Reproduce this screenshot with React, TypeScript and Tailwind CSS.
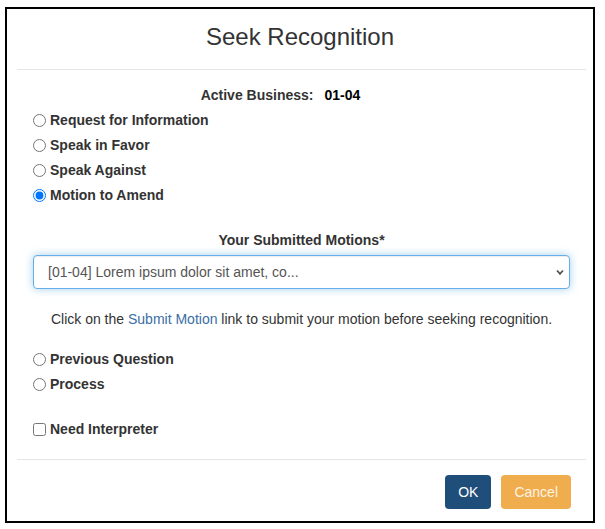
import React from 'react';

const font = { fontFamily: '"Liberation Sans", Arial, sans-serif' };

function RadioRow({ label, checked }: { label: string; checked?: boolean }) {
  return (
    <label className="flex h-[25px] items-center text-[14px] font-bold text-[#333]">
      <input type="radio" name="recognition" defaultChecked={checked} className="m-0 mr-[4px] h-[13px] w-[13px]" />
      {label}
    </label>
  );
}

export default function App() {
  return (
    <div className="min-h-[529px] w-[605px] bg-white pl-[5px] pt-[7px]" style={font}>
      <div className="flex h-[516px] w-[590px] flex-col border-2 border-black bg-white">
        <div className="flex h-[60px] items-center justify-center">
          <h4 className="pb-[4px] text-[24px] leading-none text-[#333]">Seek Recognition</h4>
        </div>
        <div className="mx-[10px] mr-[7px] h-px bg-[#e5e5e5]" />

        <div className="flex flex-col pl-[26px] pr-[23px] pt-[13px]">
          <div className="flex h-[25px] items-center justify-center pr-[42px] text-[14px] font-bold">
            <span className="text-[#333]">Active Business:</span>
            <span className="ml-[11px] text-black">01-04</span>
          </div>
          <RadioRow label="Request for Information" />
          <RadioRow label="Speak in Favor" />
          <RadioRow label="Speak Against" />
          <RadioRow label="Motion to Amend" checked />

          <div className="mt-[20px] flex h-[25px] items-center justify-center text-[14px] font-bold text-[#333]">
            Your Submitted Motions*
          </div>
          <div className="relative mt-[2px]">
            <select
              className="h-[34px] w-full appearance-none rounded-[4px] border border-[#66afe9] bg-white pl-[14px] pr-8 text-[14px] text-[#555] shadow-[inset_0_1px_1px_rgba(0,0,0,0.075),0_0_8px_rgba(102,175,233,0.6)] outline-none"
              style={font}
              defaultValue="a"
            >
              <option value="a">[01-04] Lorem ipsum dolor sit amet, co...</option>
            </select>
            <svg
              className="pointer-events-none absolute right-[6px] top-[14px] h-[7px] w-[8px]"
              viewBox="0 0 8 7"
              fill="none"
              stroke="#555"
              strokeWidth="1.8"
            >
              <path d="M1 1.5 L4 4.8 L7 1.5" />
            </svg>
          </div>

          <div className="mt-[20px] flex h-[20px] items-center justify-center text-[14px] text-[#333]">
            <span>
              Click on the <a className="text-[#3a6ea5]">Submit Motion</a> link to submit your motion before seeking recognition.
            </span>
          </div>

          <div className="mt-[18px]">
            <RadioRow label="Previous Question" />
            <RadioRow label="Process" />
          </div>

          <label className="mt-[20px] flex h-[25px] items-center text-[14px] font-bold text-[#333]">
            <input type="checkbox" className="m-0 mr-[4px] h-[13px] w-[13px]" />
            Need Interpreter
          </label>
        </div>

        <div className="mx-[10px] mr-[7px] mt-[17px] h-px bg-[#e5e5e5]" />
        <div className="flex justify-end gap-[10px] pr-[22px] pt-[15px]">
          <button className="h-[34px] rounded-[4px] bg-[#1f4e7a] px-[13px] text-[14px] text-white" style={font}>
            OK
          </button>
          <button className="h-[34px] rounded-[4px] bg-[#f0ad4e] px-[13px] text-[14px] text-[#fdf3e4]" style={font}>
            Cancel
          </button>
        </div>
      </div>
    </div>
  );
}
